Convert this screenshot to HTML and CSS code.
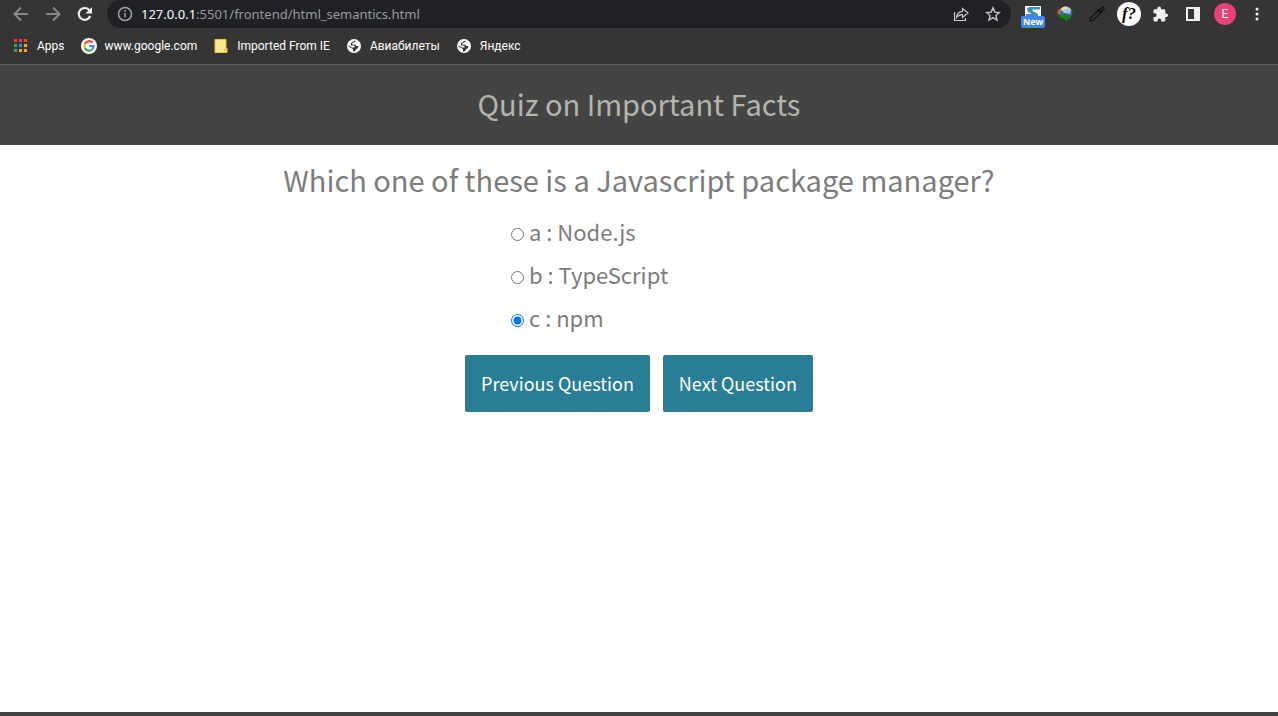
FILE: index.html
```html
<!DOCTYPE html>
<html lang="en">
<head>
<meta charset="utf-8">
<title>Quiz on Important Facts</title>
<link rel="stylesheet" href="styles.css">
</head>
<body>
<div class="browser">
  <div class="toolbar">
    <div class="nav">
      <button class="icon-button dim" aria-label="Back"><svg width="16" height="16" viewBox="0 0 16 16" fill="none" stroke="currentColor" stroke-width="2"><path d="M15 8H2M8 1.5 1.5 8 8 14.5"/></svg></button>
      <button class="icon-button dim" aria-label="Forward"><svg width="16" height="16" viewBox="0 0 16 16" fill="none" stroke="currentColor" stroke-width="2"><path d="M1 8h13M8 1.5 14.5 8 8 14.5"/></svg></button>
      <button class="icon-button" aria-label="Reload"><svg width="16" height="16" viewBox="0 0 16 16"><path d="M13.2 10A5.9 5.9 0 1 1 12.5 4.5" fill="none" stroke="currentColor" stroke-width="2.2"/><path d="M15 1v6.5H8.5z" fill="currentColor"/></svg></button>
    </div>
    <div class="address">
      <svg width="16" height="16" viewBox="0 0 16 16" fill="none" stroke="#a0a3a7" stroke-width="1.5"><circle cx="8" cy="8" r="6.5"/><path d="M8 7v4.5M8 4v1.8"/></svg>
      <span class="url"><b>127.0.0.1</b>:5501/frontend/html_semantics.html</span>
      <button class="icon-button light" aria-label="Share"><svg width="16" height="16" viewBox="0 0 16 16" fill="none" stroke="currentColor" stroke-width="1.2"><path d="M1.5 6v8.500h11V12M3.500 11.500C4 7.500 6 5.500 9.500 5.300V2.500L15 7l-5.500 4.500V8.700C7 8.700 5 9.500 3.500 11.500z"/></svg></button>
      <button class="icon-button light" aria-label="Bookmark"><svg width="16" height="16" viewBox="0 0 16 16" fill="none" stroke="currentColor" stroke-width="1.4"><path d="m8 1.900 1.800 4.200 4.600.4-3.500 3 1.100 4.500L8 11.600 4 14l1.100-4.500-3.500-3 4.600-.4z"/></svg></button>
    </div>
    <div class="extensions">
      <button class="icon-button extension" aria-label="New extension"><svg width="16" height="16" viewBox="0 0 16 16"><path d="M0 0h16v12H0z" fill="#fff"/><path d="M15 1v2.500H8.500Q6 4 8.500 5.500L13 8v2H1V8h6L3 6Q0 1 6 1z" fill="#3d8ebb"/></svg><span class="badge">New</span></button>
      <button class="icon-button" aria-label="Download manager"><svg width="18" height="18" viewBox="0 0 18 18"><circle cx="10" cy="7.500" r="6.500" fill="#38669b"/><path d="M5 3.500Q10-1 15.500 5q-5-1.500-11 1z" fill="#e7e5a1"/><path d="M6 5.500q5-2.500 9-.5l-1 4-6-1z" fill="#a7c4e7"/><path d="M1.500 8.500Q1 4 5.500 3.500L4 6l1 2-2 2z" fill="#d85a31"/><path d="M2 8q1 2.500 6 2.500V8l7.500 4.500L9 16v-2.500Q2 13 2 8z" fill="#10880f"/></svg></button>
      <button class="icon-button black" aria-label="Color picker"><svg width="18" height="18" viewBox="0 0 18 18"><path d="m2 16 .5-3L11 4.500 13.500 7 5 15.500zM9.500 4.500l4 4M12 4.500l2-2q1.500-1 2 0 .500 1-.5 2l-2 2" fill="none" stroke="currentColor" stroke-width="1.300"/></svg></button>
      <button class="round font-badge" aria-label="WhatFont">f?</button>
      <button class="icon-button" aria-label="Extensions"><svg width="16" height="16" viewBox="0 0 16 16" fill="currentColor"><path d="M13.300 7.500h-1V4.700c0-.8-.6-1.400-1.400-1.400H8V2.200a1.800 1.800 0 0 0-3.600 0v1.100H1.900C1.100 3.300.500 3.900.500 4.700v2.600h1.200a1.900 1.900 0 0 1 0 3.800H.500V14c0 .8.6 1.400 1.400 1.400h2.700v-1.200a1.800 1.800 0 0 1 3.600 0v1.200h2.700c.8 0 1.400-.6 1.400-1.400v-2.900h1a1.800 1.800 0 0 0 0-3.600z"/></svg></button>
      <button class="icon-button" aria-label="Side panel"><svg width="16" height="16" viewBox="0 0 16 16"><path d="M2 2h12v12H2z" fill="none" stroke="currentColor" stroke-width="2"/><path d="M9 1h6v14H9z" fill="currentColor"/></svg></button>
      <button class="round profile" aria-label="Profile">E</button>
      <button class="icon-button" aria-label="Menu"><svg width="16" height="16" viewBox="0 0 16 16" fill="currentColor"><circle cx="8" cy="3" r="1.500"/><circle cx="8" cy="8" r="1.500"/><circle cx="8" cy="13" r="1.500"/></svg></button>
    </div>
  </div>
  <nav class="bookmarks" aria-label="Bookmarks">
    <a href="#"><svg width="16" height="16" viewBox="0 0 16 16"><path d="M1 1h3v3H1zM6 1h3v3H6zM11 1h3v3h-3z" fill="#ea4335"/><path d="M1 6h3v3H1zM1 11h3v3H1z" fill="#34a853"/><path d="M6 6h3v3H6z" fill="#4285f4"/><path d="M11 6h3v3h-3zM6 11h3v3H6zM11 11h3v3h-3z" fill="#fbac05"/></svg>Apps</a>
    <a href="#"><svg width="16" height="16" viewBox="0 0 16 16"><circle cx="8" cy="8" r="8" fill="#fff"/><g fill="none" stroke-width="2.100"><path d="M11.500 4.600A4.600 4.600 0 0 0 3.900 6" stroke="#ea4335"/><path d="M3.900 6a4.600 4.600 0 0 0 0 4" stroke="#fbbc05"/><path d="M3.900 10a4.600 4.600 0 0 0 7.200 1.500" stroke="#34a853"/><path d="M11.100 11.500Q12.500 10.300 12.600 8H8.200" stroke="#4285f4"/></g></svg>www.google.com</a>
    <a href="#"><svg width="16" height="16" viewBox="0 0 16 16"><path d="M2 1.500h11v9h1v4H2z" fill="#ffe58f" stroke="#efc443"/><path d="M11.500 14v-3H14" fill="none" stroke="#efc443"/></svg>Imported From IE</a>
    <a href="#"><svg width="16" height="16" viewBox="0 0 16 16"><circle cx="8" cy="8" r="7" fill="#fff"/><path d="M9.500 2.500Q10 4 8 4.500 6 4.500 6 6.500h3q1 0 1 1.500h2.500q0 2-2 3l-2 2.500H7V11q-1.500 0-1.500-2L2.500 7.500v1L6 10.500V9.500h2.500v-2H5V5l2.500-1.500z" fill="#35363a"/></svg>Авиабилеты</a>
    <a href="#"><svg width="16" height="16" viewBox="0 0 16 16"><circle cx="8" cy="8" r="7" fill="#fff"/><path d="M9.500 2.500Q10 4 8 4.500 6 4.500 6 6.500h3q1 0 1 1.500h2.500q0 2-2 3l-2 2.500H7V11q-1.500 0-1.500-2L2.500 7.500v1L6 10.500V9.500h2.500v-2H5V5l2.500-1.500z" fill="#35363a"/></svg>Яндекс</a>
  </nav>
</div>
<header class="page-header"><h1>Quiz on Important Facts</h1></header>
<main class="quiz">
  <h2 id="question">Which one of these is a Javascript package manager?</h2>
  <div class="options" role="radiogroup" aria-labelledby="question">
    <label><input type="radio" name="answer" value="a">a : Node.js</label>
    <label><input type="radio" name="answer" value="b">b : TypeScript</label>
    <label><input type="radio" name="answer" value="c" checked>c : npm</label>
  </div>
  <div class="actions">
    <button>Previous Question</button>
    <button>Next Question</button>
  </div>
</main>
<footer class="page-footer"></footer>
</body>
</html>
```

FILE: styles.css
```css
* { box-sizing: border-box; }

body {
  display: flex;
  flex-direction: column;
  min-height: 100vh;
  margin: 0;
  background: #fff;
  color: #7c7c7c;
  font-family: "Noto Sans CJK SC", sans-serif;
}

button { border: 0; font-family: inherit; }
svg { display: block; flex: none; }

.browser {
  background: #353535;
  border-bottom: 1px solid #606060;
  color: #fff;
  font-family: "Noto Sans", sans-serif;
}

.toolbar { display: flex; height: 28px; }

.nav {
  display: flex;
  align-items: center;
  gap: 16px;
  padding: 0 14px 0 13px;
}

.icon-button {
  display: flex;
  padding: 0;
  background: none;
  color: #f1f1f1;
}
.icon-button.dim { color: #888; }
.icon-button.light { color: #c5c6c8; }
.icon-button.black { color: #111; }

.address {
  display: flex;
  flex: 1;
  align-items: center;
  gap: 16px;
  padding: 0 10px;
  border-radius: 14px;
  background: #202124;
}

.url {
  flex: 1;
  margin-left: -8px;
  color: #9a9b9e;
  font-size: 13px;
  line-height: 20px;
}
.url b { color: #fff; font-weight: 400; }

.extensions {
  display: grid;
  grid-template-columns: repeat(8, 32px);
  place-items: center;
  padding: 0 5px 0 6px;
}

.extension { position: relative; }
.badge {
  position: absolute;
  top: 10px;
  left: -4px;
  width: 24px;
  border-radius: 2px;
  background: #4285f4;
  color: #fff;
  font-size: 9px;
  font-weight: 700;
  line-height: 12px;
  text-align: center;
}

.round {
  display: grid;
  place-items: center;
  width: 24px;
  height: 24px;
  padding: 0;
  border-radius: 50%;
}
.font-badge {
  background: #fff;
  color: #000;
  font: italic 700 17px/20px "Liberation Serif", serif;
}
.profile {
  width: 22px;
  height: 22px;
  background: #ec407a;
  color: #fff;
  font: 12px/20px Roboto, sans-serif;
}

.bookmarks {
  display: flex;
  align-items: center;
  gap: 16px;
  height: 36px;
  padding: 0 13px;
  font-family: Roboto, sans-serif;
}
.bookmarks a {
  display: flex;
  align-items: center;
  gap: 8px;
  color: #fff;
  font-size: 12px;
  line-height: 16px;
  text-decoration: none;
}

.page-header {
  padding: 14px 16px 18px;
  background: #444;
  color: #b5b5ad;
  text-align: center;
}

h1, h2 {
  margin: 0;
  font-size: 29px;
  font-weight: 400;
  line-height: 48px;
}

.quiz {
  display: flex;
  flex: 1;
  flex-direction: column;
  align-items: center;
  padding: 10px 16px;
}
h2 { text-align: center; }

.options { width: 256px; padding-top: 7px; }
.options label {
  display: flex;
  align-items: baseline;
  gap: 5px;
  font-size: 22px;
  line-height: 43px;
}
.options input { width: 13px; height: 13px; margin: 0; }

.actions {
  display: flex;
  flex-wrap: wrap;
  justify-content: center;
  gap: 13px;
  padding-top: 16px;
}
.actions button {
  padding: 16px;
  border-radius: 2px;
  background: #297d95;
  color: #fff;
  font-size: 18px;
  font-weight: 400;
  line-height: 25px;
}

.page-footer { height: 4px; background: #444; }
```
